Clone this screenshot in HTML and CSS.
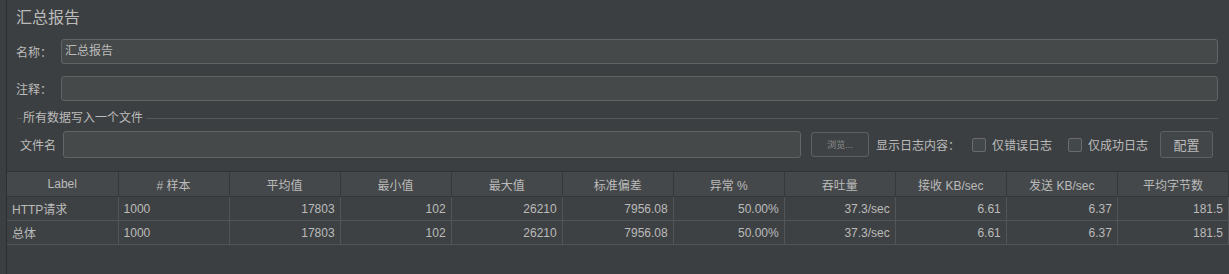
FILE: index.html
```html
<!DOCTYPE html>
<html lang="zh-CN">
<head>
    <meta charset="UTF-8">
    <meta name="viewport" content="width=device-width, initial-scale=1.0">
    <title>汇总报告</title>
    <link rel="stylesheet" href="styles.css">
</head>
<body>

    <div class="panel">

        <!-- Form part -->
        <div class="form">
            <h1 class="title">汇总报告</h1>

            <div class="field">
                <label>名称：</label>
                <div class="input">汇总报告</div>
            </div>

            <div class="field field-gap">
                <label>注释：</label>
                <div class="input"></div>
            </div>

            <!-- Titled group -->
            <div class="group">
                <div class="group-title">
                    <span class="line-short"></span>
                    <span class="group-text">所有数据写入一个文件</span>
                    <span class="line-long"></span>
                </div>

                <div class="file-row">
                    <label>文件名</label>
                    <div class="input input-file"></div>
                    <button class="btn btn-small">浏览...</button>
                    <span class="log-label">显示日志内容：</span>
                    <span class="check"><span class="box"></span>仅错误日志</span>
                    <span class="check"><span class="box"></span>仅成功日志</span>
                    <button class="btn btn-config">配置</button>
                </div>
            </div>
        </div>

        <!-- Results table -->
        <table class="results">
            <thead>
                <tr>
                    <th>Label</th>
                    <th># 样本</th>
                    <th>平均值</th>
                    <th>最小值</th>
                    <th>最大值</th>
                    <th>标准偏差</th>
                    <th>异常 %</th>
                    <th>吞吐量</th>
                    <th>接收 KB/sec</th>
                    <th>发送 KB/sec</th>
                    <th>平均字节数</th>
                </tr>
            </thead>
            <tbody>
                <tr>
                    <td class="left">HTTP请求</td>
                    <td class="left">1000</td>
                    <td>17803</td>
                    <td>102</td>
                    <td>26210</td>
                    <td>7956.08</td>
                    <td>50.00%</td>
                    <td>37.3/sec</td>
                    <td>6.61</td>
                    <td>6.37</td>
                    <td>181.5</td>
                </tr>
                <tr>
                    <td class="left">总体</td>
                    <td class="left">1000</td>
                    <td>17803</td>
                    <td>102</td>
                    <td>26210</td>
                    <td>7956.08</td>
                    <td>50.00%</td>
                    <td>37.3/sec</td>
                    <td>6.61</td>
                    <td>6.37</td>
                    <td>181.5</td>
                </tr>
            </tbody>
        </table>

    </div>

</body>
</html>
```

FILE: styles.css
```css
* {
    margin: 0;
    padding: 0;
    box-sizing: border-box;
}

body {
    font-family: 'Liberation Sans', 'Noto Sans CJK SC', sans-serif;
    font-size: 12px;
    height: 100vh;
    background-color: #3c3f41;
    color: #bbbbbb;
    padding-left: 6px;
    overflow: hidden;
}

/* Main panel with the dark left edge */
.panel {
    height: 100%;
    border-left: 1px solid #2c2e2f;
}

.form {
    padding: 6px 11px 0 9px;
}

.title {
    font-size: 16px;
    font-weight: normal;
    line-height: 24px;
    color: #bbbbbb;
}

/* Label + input rows */
.field {
    display: flex;
    align-items: center;
    margin-top: 9px;
}
.field-gap {
    margin-top: 12px;
}
.field label {
    width: 45px;
}

.input {
    flex: 1;
    height: 25px;
    line-height: 23px;
    padding: 0 3px;
    background-color: #45494a;
    border: 1px solid #646464;
    border-radius: 3px;
    color: #bbbbbb;
}

/* Titled border group */
.group {
    margin-top: 9px;
    margin-left: 1px;
}
.group-title {
    display: flex;
    align-items: center;
    height: 16px;
}
.line-short {
    width: 5px;
    border-top: 1px solid #55585a;
}
.line-long {
    flex: 1;
    border-top: 1px solid #55585a;
}
.group-text {
    padding: 0 3px 0 1px;
    line-height: 16px;
}

.file-row {
    display: flex;
    align-items: center;
    margin-top: 5px;
    padding-left: 3px;
    padding-right: 5px;
}
.file-row label {
    width: 43px;
}
.input-file {
    height: 27px;
}

.btn {
    font-family: 'Liberation Sans', 'Noto Sans CJK SC', sans-serif;
    background-color: #3f4244;
    border: 1px solid #5e6162;
    border-radius: 3px;
    color: #bbbbbb;
}
.btn-small {
    width: 58px;
    height: 25px;
    margin-left: 10px;
    font-size: 9px;
    color: #8c8f90;
}
.btn-config {
    width: 53px;
    height: 27px;
    margin-left: 12px;
    font-size: 13px;
    background-color: #434648;
}

.log-label {
    margin-left: 7px;
    margin-right: 12px;
}

.check {
    display: flex;
    align-items: center;
    margin-right: 16px;
}
.check:last-of-type {
    margin-right: 0;
}
.box {
    width: 14px;
    height: 14px;
    margin-right: 6px;
    background-color: #43494a;
    border: 1px solid #6b6b6b;
    border-radius: 2px;
}

/* Results table */
.results {
    margin-top: 13px;
    width: 1222px;
    table-layout: fixed;
    border-collapse: collapse;
    border-top: 1px solid #2f3133;
}
.results th {
    height: 25px;
    font-weight: normal;
    text-align: center;
    background-color: #45484a;
    border-right: 1px solid #353738;
    border-bottom: 1px solid #353738;
}
.results td {
    height: 24px;
    padding: 0 5px;
    text-align: right;
    background-color: #3e4143;
    border-right: 1px solid #525557;
    border-bottom: 1px solid #525557;
}
.results td.left {
    text-align: left;
}
```
